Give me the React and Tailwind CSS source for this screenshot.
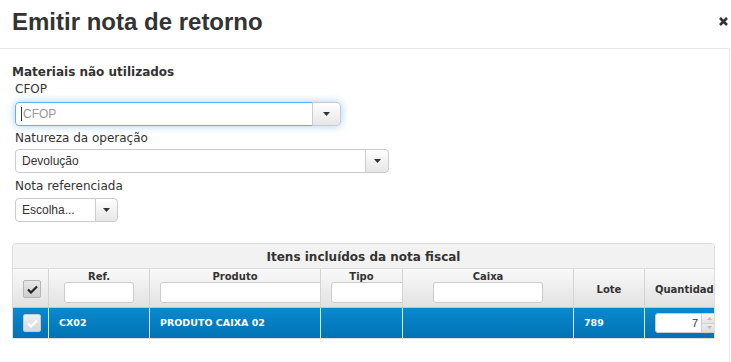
import React from "react";

const dv = "font-['DejaVu_Sans',sans-serif]";
const ar = "font-['Liberation_Sans',Arial,sans-serif]";

function Caret() {
  return (
    <svg width="7" height="4" viewBox="0 0 7 4">
      <path d="M0 0h7L3.5 4z" fill="#333" />
    </svg>
  );
}

function Select({ w, btn, focused, children }) {
  return (
    <div
      className={`flex h-[24px] ${w} rounded-[4px] ${
        focused ? "shadow-[0_0_8px_rgba(102,175,233,0.6)]" : ""
      }`}
    >
      <div
        className={`flex-1 flex items-center pl-[5px] border rounded-l-[4px] bg-white text-[12px] text-[#333] ${ar} ${
          focused ? "border-[#66afe9]" : "border-[#ccc]"
        }`}
      >
        {children}
      </div>
      <div
        className={`${btn} -ml-px flex items-center justify-center border border-[#ccc] rounded-r-[4px] bg-linear-to-b from-white to-[#e6e6e6]`}
      >
        <Caret />
      </div>
    </div>
  );
}

function Check({ color }) {
  return (
    <svg width="11" height="9" viewBox="0 0 11 9">
      <path d="M1 4.5l3 3L10 1.5" fill="none" stroke={color} strokeWidth="2.2" />
    </svg>
  );
}

function FilterInput({ className }) {
  return <div className={`h-[21px] bg-white border border-[#ccc] rounded-[3px] ${className}`} />;
}

export default function App() {
  return (
    <div className="w-[731px] h-[362px] overflow-hidden bg-white text-[#333]">
      {/* Header */}
      <div className="h-[48px] flex justify-between pl-[12px] pt-[10px] pr-[3px]">
        <h1 className={`text-[24px] leading-[24px] font-bold text-[#333] ${ar}`}>
          Emitir nota de retorno
        </h1>
        <svg width="9" height="9" viewBox="0 0 9 9" className="mt-[7px]">
          <path d="M1 1l7 7M8 1L1 8" stroke="#333" strokeWidth="2.6" />
        </svg>
      </div>

      {/* Body */}
      <div className="w-[730px] h-[314px] border-t border-r border-[#e8e8e8] pt-[15px]">
        <div className={`pl-[12px] text-[12px] leading-[17px] font-bold ${dv}`}>
          Materiais não utilizados
        </div>

        <div className={`ml-[15px] text-[12px] ${dv}`}>
          <div className="leading-[17px]">CFOP</div>
          <div className="mt-[4px]">
            <Select w="w-[326px]" btn="w-[29px]" focused>
              <span className="w-px h-[14px] bg-[#333] mr-px" />
              <span className="text-[#999]">CFOP</span>
            </Select>
          </div>

          <div className="mt-[4px] leading-[17px]">Natureza da operação</div>
          <div className="mt-[2px]">
            <Select w="w-[374px]" btn="w-[24px]">
              <span className="pl-px">Devolução</span>
            </Select>
          </div>

          <div className="mt-[5px] leading-[17px]">Nota referenciada</div>
          <div className="mt-[3px]">
            <Select w="w-[103px]" btn="w-[23px]">
              <span className="pl-px">Escolha...</span>
            </Select>
          </div>
        </div>

        {/* Grid */}
        <div className="mt-[21px] ml-[12px] w-[703px] border border-[#dddddd] rounded-t-[4px] overflow-hidden">
          <div
            className={`h-[25px] bg-[#f2f2f2] border-b border-[#dddddd] text-center text-[12px] leading-[25px] font-bold pt-[1px] ${dv}`}
          >
            Itens incluídos da nota fiscal
          </div>

          <div
            className={`flex h-[39px] border-b border-[#c5c5c5] bg-linear-to-b from-[#f9f9f9] to-[#e2e2e2] text-[10px] font-bold leading-[11px] ${dv}`}
          >
            <div className="w-[36px] shrink-0 border-r border-[#d4d4d4] flex items-center justify-center pl-[3px] pt-[2px]">
              <div className="w-[18px] h-[18px] rounded-[2px] border border-[#b5b5b5] bg-linear-to-b from-[#e8e8e8] to-[#cfcfcf] flex items-center justify-center">
                <Check color="#222" />
              </div>
            </div>
            <div className="w-[101px] shrink-0 border-r border-[#d4d4d4] flex flex-col items-center pt-[2px]">
              <div>Ref.</div>
              <FilterInput className="w-[70px]" />
            </div>
            <div className="w-[171px] shrink-0 border-r border-[#d4d4d4] overflow-hidden pt-[2px]">
              <div className="text-center">Produto</div>
              <FilterInput className="ml-[10px] w-[172px]" />
            </div>
            <div className="w-[82px] shrink-0 border-r border-[#d4d4d4] overflow-hidden pt-[2px]">
              <div className="text-center">Tipo</div>
              <FilterInput className="ml-[10px] w-[80px]" />
            </div>
            <div className="w-[171px] shrink-0 border-r border-[#d4d4d4] flex flex-col items-center pt-[2px]">
              <div>Caixa</div>
              <FilterInput className="w-[110px]" />
            </div>
            <div className="w-[71px] shrink-0 border-r border-[#d4d4d4] flex items-center justify-center pt-[2px]">
              Lote
            </div>
            <div className="flex-1 overflow-hidden flex items-center pl-[10px] pt-[2px] whitespace-nowrap">
              Quantidade
            </div>
          </div>

          <div
            className={`flex h-[30px] bg-linear-to-b from-[#0b89d0] to-[#0072b3] text-white text-[9.5px] font-bold ${dv}`}
          >
            <div className="w-[36px] shrink-0 border-r border-[#d9e7f0] flex items-center justify-center pl-[3px]">
              <div className="w-[18px] h-[18px] rounded-[2px] border border-[#c3ccd3] bg-linear-to-b from-[#eef0f2] to-[#d3d8dc] flex items-center justify-center">
                <Check color="#ffffff" />
              </div>
            </div>
            <div className="w-[101px] shrink-0 border-r border-[#d9e7f0] flex items-center pl-[10px]">CX02</div>
            <div className="w-[171px] shrink-0 border-r border-[#d9e7f0] flex items-center pl-[10px]">
              PRODUTO CAIXA 02
            </div>
            <div className="w-[82px] shrink-0 border-r border-[#d9e7f0]" />
            <div className="w-[171px] shrink-0 border-r border-[#d9e7f0]" />
            <div className="w-[71px] shrink-0 border-r border-[#d9e7f0] flex items-center pl-[10px]">789</div>
            <div className="flex-1 overflow-hidden flex items-center pl-[10px]">
              <div className="flex h-[20px] w-[72px] shrink-0 bg-white rounded-[3px] border border-[#ccc]">
                <div className={`w-[45px] flex items-center justify-end pr-[3px] text-[11px] font-normal text-[#333] ${ar}`}>
                  7
                </div>
                <div className="w-[15px] flex flex-col border-l border-[#ccc]">
                  <div className="flex-1 bg-linear-to-b from-[#f6f6f6] to-[#e4e4e4] border-b border-[#d0d0d0] flex items-center justify-center">
                    <svg width="5" height="3" viewBox="0 0 5 3"><path d="M0 3h5L2.5 0z" fill="#bbb" /></svg>
                  </div>
                  <div className="flex-1 bg-linear-to-b from-[#eeeeee] to-[#dcdcdc] flex items-center justify-center">
                    <svg width="5" height="3" viewBox="0 0 5 3"><path d="M0 0h5L2.5 3z" fill="#bbb" /></svg>
                  </div>
                </div>
              </div>
            </div>
          </div>
        </div>
      </div>
    </div>
  );
}
